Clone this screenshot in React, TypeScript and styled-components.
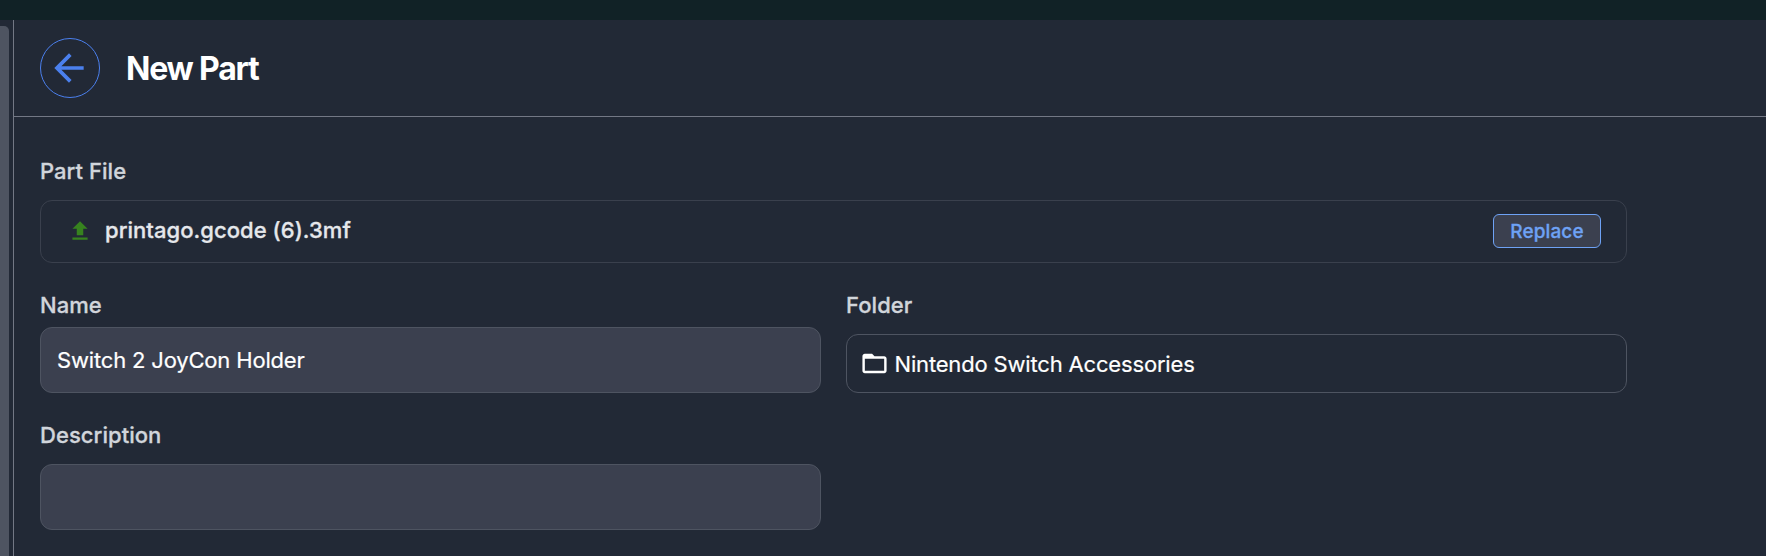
import React from "react";
import styled, { createGlobalStyle } from "styled-components";

const Global = createGlobalStyle`
  *, *::before, *::after { box-sizing: border-box; }
  body { margin: 0; background: #222936; font-family: Inter, "Liberation Sans", sans-serif; overflow: hidden; }
`;

const Page = styled.div`
  display: flex;
  flex-direction: column;
  height: 556px;
  color: #fff;
`;

const TopBar = styled.div`
  flex: none;
  height: 20px;
  background: #112226;
`;

const Body = styled.div`
  flex: 1;
  min-height: 0;
  display: flex;
`;

const ScrollTrack = styled.div`
  width: 13px;
  padding-top: 6px;
  display: flex;
`;

const ScrollThumb = styled.div`
  width: 9px;
  border-radius: 0 5px 0 0;
  background: #4e5461;
`;

const Panel = styled.main`
  flex: 1;
  border-left: 1px solid #737885;
`;

const Header = styled.header`
  display: flex;
  align-items: center;
  gap: 26px;
  height: 97px;
  padding: 0 26px;
  border-bottom: 1px solid #737885;
`;

const BackButton = styled.button`
  display: flex;
  align-items: center;
  justify-content: center;
  width: 60px;
  height: 60px;
  padding: 0 2px 0 0;
  border: 1px solid #4b80ee;
  border-radius: 50%;
  background: none;
  color: #4b80ee;
`;

const Title = styled.h1`
  margin: 2px 0 0;
  font-size: 32px;
  line-height: 40px;
  font-weight: 700;
  letter-spacing: -1.2px;
`;

const Form = styled.form`
  display: grid;
  grid-template-columns: 781px 781px;
  column-gap: 25px;
  padding: 37px 26px 0;
`;

const Field = styled.div<{ $wide?: boolean; $gap?: number; $height: number }>`
  grid-column: ${(p) => (p.$wide ? "1 / -1" : "auto")};
  display: flex;
  flex-direction: column;
  gap: ${(p) => p.$gap ?? 12}px;
  height: ${(p) => p.$height}px;
`;

const Label = styled.label`
  align-self: flex-start;
  font-size: 22px;
  line-height: 34px;
  font-weight: 500;
  letter-spacing: 0.05px;
  -webkit-text-stroke: 0.3px currentColor;
  color: #d1d5db;
`;

const FileBox = styled.div`
  display: flex;
  align-items: center;
  height: 63px;
  padding: 0 25px 2px 26px;
  border: 1px solid #3a404d;
  border-radius: 12px;
`;

const FileName = styled.span`
  flex: 1;
  margin: 0 0 2px 12px;
  font-size: 22px;
  line-height: 30px;
  font-weight: 500;
  letter-spacing: 0.05px;
  -webkit-text-stroke: 0.3px currentColor;
  color: #e5e7eb;
`;

const ReplaceButton = styled.button`
  width: 108px;
  height: 34px;
  padding: 1px 0 0;
  border: 1px solid #6ea2f5;
  border-radius: 6px;
  background: #3b404f;
  color: #6ea2f5;
  font: 500 19px/31px Inter, sans-serif;
  letter-spacing: 0.1px;
  -webkit-text-stroke: 0.3px currentColor;
`;

const TextInput = styled.input`
  width: 100%;
  height: 66px;
  padding: 0 16px;
  border: 1px solid #4e5461;
  border-radius: 12px;
  outline: none;
  background: #3b404f;
  color: #fff;
  font: 400 22px/30px Inter, sans-serif;
  letter-spacing: -0.17px;
  -webkit-text-stroke: 0.2px currentColor;
`;

const FolderBox = styled.div`
  display: flex;
  align-items: center;
  gap: 6px;
  height: 59px;
  padding: 0 12.5px;
  border: 1px solid #4e5461;
  border-radius: 12px;
  font-size: 22px;
  letter-spacing: -0.17px;
  -webkit-text-stroke: 0.2px currentColor;
`;

const IconSvg = styled.svg`
  flex: none;
  display: block;
`;

const Icon = ({ size, d, color = "currentColor" }: { size: number; d: string; color?: string }) => (
  <IconSvg width={size} height={size} viewBox="0 0 24 24" fill={color}>
    <path d={d} />
  </IconSvg>
);

const BACK = "M20 11H7.83l5.59-5.59L12 4l-8 8 8 8 1.41-1.41L7.83 13H20v-2z";
const UPLOAD = "M5 20h14v-2H5v2zM5 10h4v6h6v-6h4l-7-7-7 7z";
const FOLDER = "M20 6h-8l-2-2H4c-1.1 0-1.99.9-1.99 2L2 18c0 1.1.9 2 2 2h16c1.1 0 2-.9 2-2V8c0-1.1-.9-2-2-2zm0 12H4V8h16v10z";

export default function App() {
  return (
    <Page>
      <Global />
      <TopBar />
      <Body>
        <ScrollTrack>
          <ScrollThumb />
        </ScrollTrack>
        <Panel>
          <Header>
            <BackButton type="button" aria-label="Back">
              <Icon size={44} d={BACK} />
            </BackButton>
            <Title>New Part</Title>
          </Header>
          <Form>
            <Field $wide $height={134}>
              <Label>Part File</Label>
              <FileBox>
                <Icon size={26} d={UPLOAD} color="#37831f" />
                <FileName>printago.gcode (6).3mf</FileName>
                <ReplaceButton type="button">Replace</ReplaceButton>
              </FileBox>
            </Field>
            <Field $gap={5} $height={130}>
              <Label htmlFor="name">Name</Label>
              <TextInput id="name" defaultValue="Switch 2 JoyCon Holder" />
            </Field>
            <Field $gap={12} $height={130}>
              <Label>Folder</Label>
              <FolderBox>
                <Icon size={29} d={FOLDER} />
                Nintendo Switch Accessories
              </FolderBox>
            </Field>
            <Field $gap={12} $height={112}>
              <Label htmlFor="description">Description</Label>
              <TextInput id="description" />
            </Field>
          </Form>
        </Panel>
      </Body>
    </Page>
  );
}
